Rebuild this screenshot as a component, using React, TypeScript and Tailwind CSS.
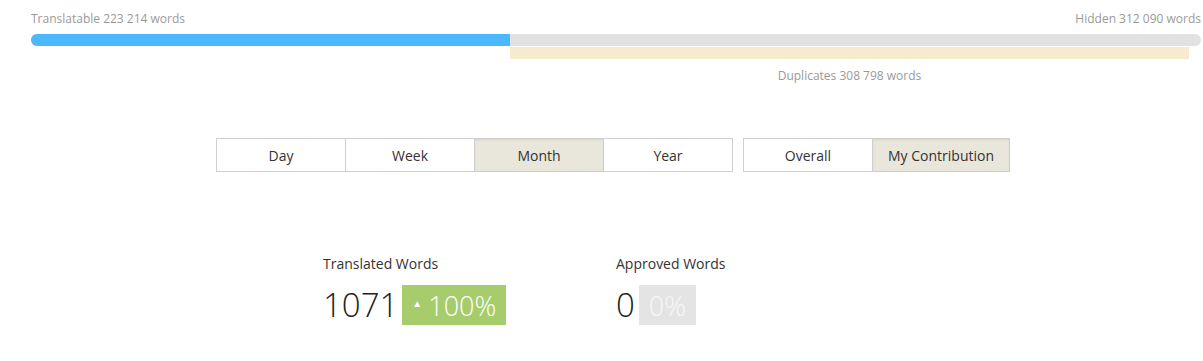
const FONT = { fontFamily: '"Open Sans", "Noto Sans", sans-serif' }

const PERIODS = ['Day', 'Week', 'Month', 'Year'] as const
const SCOPES = ['Overall', 'My Contribution'] as const

function SegButton({ label, active, width }: { label: string; active: boolean; width: string }) {
  return (
    <button
      className={`${width} h-[34px] border border-[#cfcfcf] -ml-px first:ml-0 text-[14px] text-[#333] ${
        active ? 'bg-[#e9e7dc] shadow-[inset_0_1px_2px_rgba(0,0,0,0.08)]' : 'bg-white'
      }`}
    >
      {label}
    </button>
  )
}

function Stat({
  label,
  value,
  pct,
  up
}: {
  label: string
  value: string
  pct: string
  up: boolean
}) {
  return (
    <div className="flex flex-col">
      <span className="text-[14px] leading-[20px] text-[#333]">{label}</span>
      <div className="mt-[11px] flex items-center gap-[4px]">
        <span className="text-[33px] font-light leading-[40px] text-[#222]">{value}</span>
        <span
          className={`flex h-[40px] items-center px-[10px] text-[27px] font-light leading-none ${
            up ? 'bg-[#a6cc6c] text-white' : 'bg-[#e4e4e4] text-[#f7f7f7]'
          }`}
        >
          {up && <span className="mr-[6px] mt-[-4px] text-[10px]">▲</span>}
          {pct}
        </span>
      </div>
    </div>
  )
}

export default function App() {
  return (
    <div className="h-[361px] w-[1203px] bg-white" style={FONT}>
      <div className="pl-[31px] pr-[2px] pt-[10px]">
        {/* Progress header */}
        <div className="flex justify-between text-[12px] leading-[17px] text-[#9a9a9a]">
          <span>Translatable 223 214 words</span>
          <span>Hidden 312 090 words</span>
        </div>
        <div className="mt-[7px] flex h-[12px] overflow-hidden rounded-full bg-[#e2e2e2]">
          <div className="h-full w-[479px] bg-[#4cb8fc]" />
        </div>
        <div className="ml-[479px] mt-px flex w-[679px] flex-col items-center">
          <div className="h-[12px] w-full bg-[#f6ebcf]" />
          <span className="mt-[8px] text-[12px] leading-[17px] text-[#9a9a9a]">
            Duplicates 308 798 words
          </span>
        </div>

        {/* Filters */}
        <div className="ml-[185px] mt-[54px] flex gap-[10px]">
          <div className="flex">
            {PERIODS.map((p) => (
              <SegButton key={p} label={p} active={p === 'Month'} width="w-[130px]" />
            ))}
          </div>
          <div className="flex">
            {SCOPES.map((s) => (
              <SegButton
                key={s}
                label={s}
                active={s === 'My Contribution'}
                width={s === 'Overall' ? 'w-[130px]' : 'w-[138px]'}
              />
            ))}
          </div>
        </div>

        {/* Stats */}
        <div className="ml-[292px] mt-[82px] flex">
          <div className="w-[293px]">
            <Stat label="Translated Words" value="1071" pct="100%" up />
          </div>
          <Stat label="Approved Words" value="0" pct="0%" up={false} />
        </div>
      </div>
    </div>
  )
}
